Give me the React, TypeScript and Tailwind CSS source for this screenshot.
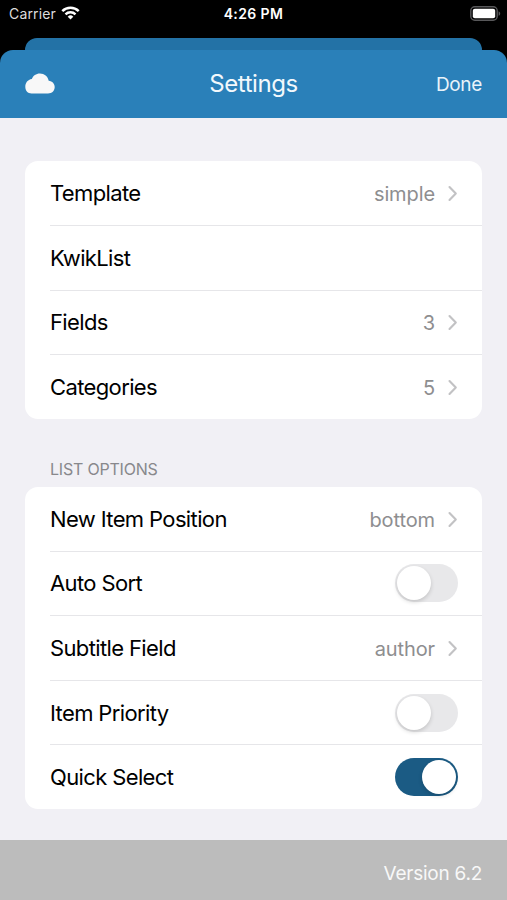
import type { ReactNode } from "react";

const Chevron = () => (
  <svg className="ml-3 h-[18px] w-[11px]" viewBox="0 0 11 18" fill="none">
    <path
      d="M2.500 3 8.800 9.500 2.500 16"
      stroke="#c2c2c4"
      strokeWidth="2.1"
      strokeLinecap="round"
      strokeLinejoin="round"
    />
  </svg>
);

const Toggle = ({ on = false }: { on?: boolean }) => (
  <button
    type="button"
    role="switch"
    aria-checked={on}
    className={
      on
        ? "flex h-[38px] w-[63px] items-center justify-end rounded-full bg-[#1b5b84] p-[2px]"
        : "flex h-[38px] w-[63px] items-center justify-start rounded-full bg-[#e8e8ea] p-[2px]"
    }
  >
    <span className="size-[34px] rounded-full bg-white shadow-[0_2px_4px_rgba(0,0,0,0.16)]" />
  </button>
);

const Value = ({ children }: { children: ReactNode }) => (
  <>
    <span className="pt-0.5 text-[20px] tracking-[-0.1px] text-[#8e8e90]">{children}</span>
    <Chevron />
  </>
);

const Row = ({ label, children }: { label: string; children?: ReactNode }) => (
  <div className="flex flex-1 items-center border-b border-[#e6e6e9] pr-[24px] last:border-b-0">
    <span className="mr-auto pt-px text-[22px] tracking-[-0.63px] text-black">{label}</span>
    {children}
  </div>
);

const StatusBar = () => (
  <div className="grid h-[38px] grid-cols-3 px-[9px] pt-[5px] text-[14px] leading-[18px] text-white">
    <div className="flex gap-[5px] text-[#dddddd]">
      <span className="tracking-[0.15px]">Carrier</span>
      <svg className="mt-[1px] h-[14px] w-[19px]" viewBox="0 0 19 14" fill="none" stroke="#fff">
        <path d="M1.3 5.1a11.7 11.7 0 0 1 16.4 0" strokeWidth="2.5" />
        <path d="M4.5 8.3a7.1 7.1 0 0 1 10 0" strokeWidth="2.4" />
        <path d="M9.5 13.6 6.7 10.7a4 4 0 0 1 5.6 0Z" fill="#fff" stroke="none" />
      </svg>
    </div>
    <span className="text-center font-semibold tracking-[0.4px]">4:26 PM</span>
    <svg className="ml-auto mr-[-3px] mt-[1px] h-[15px] w-[31px]" viewBox="0 0 31 15" fill="none">
      <rect x="0.8" y="0.8" width="26.4" height="13.4" rx="4" stroke="#58585a" strokeWidth="1.4" />
      <rect x="2.8" y="2.8" width="22.4" height="9.4" rx="2" fill="#fff" />
      <path d="M28.6 5.2v4.6c1-.4 1.6-1.3 1.6-2.3s-.6-1.900-1.600-2.300Z" fill="#58585a" />
    </svg>
  </div>
);

export default function App() {
  return (
    <div className="flex h-[900px] w-[507px] flex-col overflow-hidden bg-black font-[Inter,sans-serif]">
      <StatusBar />
      <div className="mx-[25px] h-3 shrink-0 rounded-t-[12px] bg-[#2372a6]" />

      <header className="grid h-[68px] shrink-0 grid-cols-3 items-center rounded-t-[13px] bg-[#2a80b9] px-[25px]">
        <svg className="mb-px h-[21px] w-[30px]" viewBox="0 0 30 21" fill="#f8f8f8">
          <path d="M6.500 20.500C2.900 20.500.3 17.900.3 13.800.3 9.800 2.800 6.700 6.800 6.100 8 2.600 11.100.4 14.900.4c4.500 0 8 3 8.800 7.300 3.600.4 6 2.900 6 6.300 0 3.700-2.700 6.500-6.700 6.500Z" />
        </svg>
        <h1 className="text-center text-[24px] tracking-[-0.45px] text-[#f2f8fc]">Settings</h1>
        <button
          type="button"
          className="pt-0.5 text-right text-[19px] tracking-[-0.35px] text-[#e9f3f9]"
        >
          Done
        </button>
      </header>

      <main className="flex-1 bg-[#f1f0f5] px-[25px] pt-[43px]">
        <section className="flex h-[258px] flex-col rounded-[13px] bg-white pl-[25px]">
          <Row label="Template">
            <Value>simple</Value>
          </Row>
          <Row label="KwikList" />
          <Row label="Fields">
            <Value>3</Value>
          </Row>
          <Row label="Categories">
            <Value>5</Value>
          </Row>
        </section>

        <h2 className="h-[68px] pl-[25px] pt-[40px] text-[16px] leading-[20px] tracking-[-0.2px] text-[#88888c]">
          LIST OPTIONS
        </h2>
        <section className="flex h-[322px] flex-col rounded-[13px] bg-white pl-[25px]">
          <Row label="New Item Position">
            <Value>bottom</Value>
          </Row>
          <Row label="Auto Sort">
            <Toggle />
          </Row>
          <Row label="Subtitle Field">
            <Value>author</Value>
          </Row>
          <Row label="Item Priority">
            <Toggle />
          </Row>
          <Row label="Quick Select">
            <Toggle on />
          </Row>
        </section>
      </main>

      <footer className="flex h-[60px] shrink-0 items-center justify-end bg-[#bcbcbc] px-[25px] pt-[8px] text-[19px] tracking-[-0.25px] text-[#f8f8f8]">
        Version 6.2
      </footer>
    </div>
  );
}
